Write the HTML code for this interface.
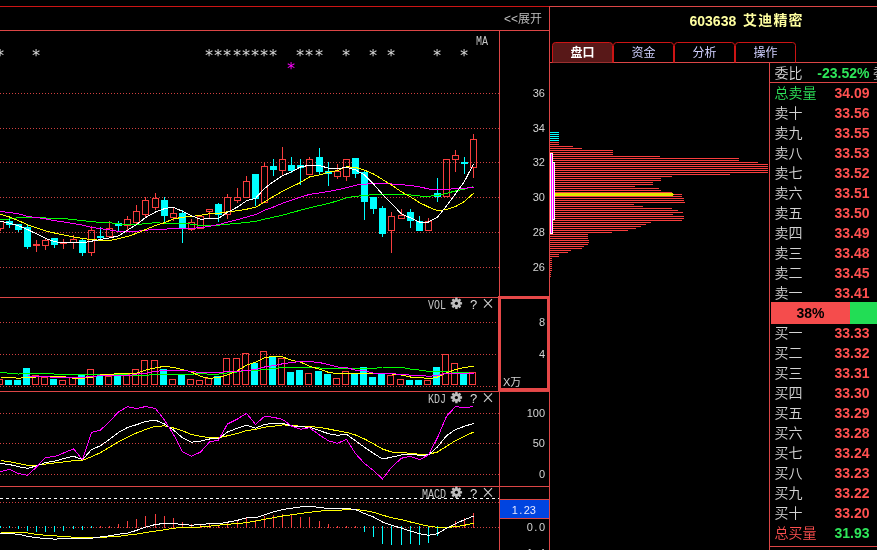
<!DOCTYPE html>
<html><head><meta charset="utf-8"><title>603638</title>
<style>
html,body{margin:0;padding:0;background:#000;}
#root{position:relative;width:877px;height:550px;overflow:hidden;background:#000;font-family:"Liberation Sans","Noto Sans CJK SC",sans-serif;}
svg{position:absolute;left:0;top:0;}
#tx{position:absolute;left:0;top:0;width:877px;height:550px;will-change:transform;}
.t{position:absolute;white-space:nowrap;line-height:1;color:#c8c8c8;}
.cj{font-family:"Liberation Sans","Noto Sans CJK SC",sans-serif;}
.ax{font-family:"Liberation Sans",sans-serif;font-size:11px;line-height:12px;color:#d4d4d4;}
.ax i{display:inline-block;width:6px;text-align:center;font-style:normal;}
.lb{font-family:"Liberation Mono",monospace;font-size:10px;line-height:12px;color:#c4c4c4;transform:scaleY(1.22);transform-origin:0 0;}
.q{font-family:"Liberation Sans",sans-serif;font-size:13px;line-height:14px;color:#dcdcdc;}
.as{font-family:"DejaVu Sans Mono","Liberation Mono",monospace;font-size:16px;line-height:16px;width:20px;text-align:center;color:#d8d8d8;}
.ttl{font-weight:bold;font-size:14px;line-height:18px;color:#ffffa0;}
.ob{font-size:14px;line-height:20px;font-weight:350;}
.num{font-family:"Liberation Sans",sans-serif;font-weight:bold;font-size:14px;line-height:20px;}
</style></head><body><div id="root">
<svg width="877" height="550" viewBox="0 0 877 550" shape-rendering="crispEdges">
<rect width="877" height="550" fill="#000"/>
<rect x="0" y="6" width="549" height="1" fill="#cc1414"/>
<rect x="549" y="6" width="328" height="1" fill="#dc4646"/>
<rect x="0" y="30" width="549" height="1" fill="#dc4646"/>
<rect x="499" y="30" width="1" height="520" fill="#dc4646"/>
<rect x="549" y="6" width="1" height="544" fill="#dc4646"/>
<rect x="549" y="62" width="328" height="1" fill="#dc4646"/>
<rect x="769" y="62" width="1" height="488" fill="#dc4646"/>
<rect x="769" y="82" width="108" height="1" fill="#dc4646"/>
<rect x="769" y="546" width="108" height="1" fill="#dc4646"/>
<rect x="0" y="297" width="499" height="1" fill="#dc4646"/>
<rect x="0" y="391" width="549" height="1" fill="#dc4646"/>
<rect x="0" y="486" width="549" height="1" fill="#dc4646"/>
<line x1="0" y1="93.5" x2="499" y2="93.5" stroke="#d04040" stroke-width="1" stroke-dasharray="1 2"/>
<line x1="0" y1="128.5" x2="499" y2="128.5" stroke="#d04040" stroke-width="1" stroke-dasharray="1 2"/>
<line x1="0" y1="162.5" x2="499" y2="162.5" stroke="#d04040" stroke-width="1" stroke-dasharray="1 2"/>
<line x1="0" y1="197.5" x2="499" y2="197.5" stroke="#d04040" stroke-width="1" stroke-dasharray="1 2"/>
<line x1="0" y1="232.5" x2="499" y2="232.5" stroke="#d04040" stroke-width="1" stroke-dasharray="1 2"/>
<line x1="0" y1="267.5" x2="499" y2="267.5" stroke="#d04040" stroke-width="1" stroke-dasharray="1 2"/>
<line x1="0" y1="322.5" x2="499" y2="322.5" stroke="#d04040" stroke-width="1" stroke-dasharray="1 2"/>
<line x1="0" y1="354.5" x2="499" y2="354.5" stroke="#d04040" stroke-width="1" stroke-dasharray="1 2"/>
<line x1="0" y1="386.5" x2="499" y2="386.5" stroke="#d04040" stroke-width="1" stroke-dasharray="1 2"/>
<line x1="0" y1="413.5" x2="499" y2="413.5" stroke="#d04040" stroke-width="1" stroke-dasharray="1 2"/>
<line x1="0" y1="443.5" x2="499" y2="443.5" stroke="#d04040" stroke-width="1" stroke-dasharray="1 2"/>
<line x1="0" y1="474.5" x2="499" y2="474.5" stroke="#d04040" stroke-width="1" stroke-dasharray="1 2"/>
<line x1="0" y1="502.5" x2="499" y2="502.5" stroke="#d04040" stroke-width="1" stroke-dasharray="1 2"/>
<line x1="0" y1="527.5" x2="499" y2="527.5" stroke="#d04040" stroke-width="1" stroke-dasharray="1 2"/>
<line x1="0" y1="498.5" x2="499" y2="498.5" stroke="#fff" stroke-width="1" stroke-dasharray="3 3"/>
<rect x="0" y="229" width="1" height="2" fill="#f83e3e"/>
<rect x="-2.5" y="221.5" width="6" height="7" fill="none" stroke="#f83e3e" stroke-width="1"/>
<rect x="9" y="219" width="1" height="2" fill="#00ffff"/>
<rect x="9" y="225" width="1" height="3" fill="#00ffff"/>
<rect x="6" y="221" width="7" height="4" fill="#00ffff"/>
<rect x="18" y="230" width="1" height="2" fill="#00ffff"/>
<rect x="15" y="224" width="7" height="6" fill="#00ffff"/>
<rect x="27" y="225" width="1" height="2" fill="#00ffff"/>
<rect x="27" y="247" width="1" height="2" fill="#00ffff"/>
<rect x="24" y="227" width="7" height="20" fill="#00ffff"/>
<rect x="36" y="240" width="1" height="4" fill="#f83e3e"/>
<rect x="36" y="246" width="1" height="6" fill="#f83e3e"/>
<rect x="33.5" y="244.5" width="6" height="1" fill="none" stroke="#f83e3e" stroke-width="1"/>
<rect x="45" y="238" width="1" height="2" fill="#f83e3e"/>
<rect x="45" y="246" width="1" height="4" fill="#f83e3e"/>
<rect x="42.5" y="240.5" width="6" height="5" fill="none" stroke="#f83e3e" stroke-width="1"/>
<rect x="54" y="245" width="1" height="3" fill="#00ffff"/>
<rect x="51" y="238" width="7" height="7" fill="#00ffff"/>
<rect x="63" y="239" width="1" height="3" fill="#f83e3e"/>
<rect x="63" y="244" width="1" height="5" fill="#f83e3e"/>
<rect x="60.5" y="242.5" width="6" height="1" fill="none" stroke="#f83e3e" stroke-width="1"/>
<rect x="73" y="235" width="1" height="4" fill="#f83e3e"/>
<rect x="73" y="243" width="1" height="6" fill="#f83e3e"/>
<rect x="70.5" y="239.5" width="6" height="3" fill="none" stroke="#f83e3e" stroke-width="1"/>
<rect x="82" y="239" width="1" height="1" fill="#00ffff"/>
<rect x="82" y="253" width="1" height="3" fill="#00ffff"/>
<rect x="79" y="240" width="7" height="13" fill="#00ffff"/>
<rect x="91" y="226" width="1" height="4" fill="#f83e3e"/>
<rect x="91" y="253" width="1" height="3" fill="#f83e3e"/>
<rect x="88.5" y="230.5" width="6" height="22" fill="none" stroke="#f83e3e" stroke-width="1"/>
<rect x="100" y="227" width="1" height="9" fill="#00ffff"/>
<rect x="100" y="238" width="1" height="3" fill="#00ffff"/>
<rect x="97" y="236" width="7" height="2" fill="#00ffff"/>
<rect x="109" y="221" width="1" height="7" fill="#f83e3e"/>
<rect x="106.5" y="228.5" width="6" height="8" fill="none" stroke="#f83e3e" stroke-width="1"/>
<rect x="118" y="221" width="1" height="2" fill="#00ffff"/>
<rect x="118" y="226" width="1" height="5" fill="#00ffff"/>
<rect x="115" y="223" width="7" height="3" fill="#00ffff"/>
<rect x="127" y="216" width="1" height="3" fill="#f83e3e"/>
<rect x="127" y="226" width="1" height="5" fill="#f83e3e"/>
<rect x="124.5" y="219.5" width="6" height="6" fill="none" stroke="#f83e3e" stroke-width="1"/>
<rect x="136" y="205" width="1" height="6" fill="#f83e3e"/>
<rect x="136" y="223" width="1" height="1" fill="#f83e3e"/>
<rect x="133.5" y="211.5" width="6" height="11" fill="none" stroke="#f83e3e" stroke-width="1"/>
<rect x="145" y="197" width="1" height="3" fill="#f83e3e"/>
<rect x="145" y="215" width="1" height="3" fill="#f83e3e"/>
<rect x="142.5" y="200.5" width="6" height="14" fill="none" stroke="#f83e3e" stroke-width="1"/>
<rect x="155" y="193" width="1" height="5" fill="#f83e3e"/>
<rect x="155" y="208" width="1" height="2" fill="#f83e3e"/>
<rect x="152.5" y="198.5" width="6" height="9" fill="none" stroke="#f83e3e" stroke-width="1"/>
<rect x="164" y="197" width="1" height="3" fill="#00ffff"/>
<rect x="164" y="216" width="1" height="7" fill="#00ffff"/>
<rect x="161" y="200" width="7" height="16" fill="#00ffff"/>
<rect x="173" y="208" width="1" height="5" fill="#f83e3e"/>
<rect x="173" y="218" width="1" height="3" fill="#f83e3e"/>
<rect x="170.5" y="213.5" width="6" height="4" fill="none" stroke="#f83e3e" stroke-width="1"/>
<rect x="182" y="210" width="1" height="3" fill="#00ffff"/>
<rect x="182" y="229" width="1" height="14" fill="#00ffff"/>
<rect x="179" y="213" width="7" height="16" fill="#00ffff"/>
<rect x="191" y="219" width="1" height="3" fill="#f83e3e"/>
<rect x="191" y="230" width="1" height="1" fill="#f83e3e"/>
<rect x="188.5" y="222.5" width="6" height="7" fill="none" stroke="#f83e3e" stroke-width="1"/>
<rect x="200" y="215" width="1" height="1" fill="#f83e3e"/>
<rect x="197.5" y="216.5" width="6" height="12" fill="none" stroke="#f83e3e" stroke-width="1"/>
<rect x="209" y="212" width="1" height="7" fill="#f83e3e"/>
<rect x="206.5" y="209.5" width="6" height="2" fill="none" stroke="#f83e3e" stroke-width="1"/>
<rect x="218" y="203" width="1" height="1" fill="#00ffff"/>
<rect x="218" y="215" width="1" height="7" fill="#00ffff"/>
<rect x="215" y="204" width="7" height="11" fill="#00ffff"/>
<rect x="227" y="194" width="1" height="3" fill="#f83e3e"/>
<rect x="227" y="215" width="1" height="4" fill="#f83e3e"/>
<rect x="224.5" y="197.5" width="6" height="17" fill="none" stroke="#f83e3e" stroke-width="1"/>
<rect x="237" y="188" width="1" height="9" fill="#f83e3e"/>
<rect x="237" y="201" width="1" height="2" fill="#f83e3e"/>
<rect x="234.5" y="197.5" width="6" height="3" fill="none" stroke="#f83e3e" stroke-width="1"/>
<rect x="246" y="176" width="1" height="5" fill="#f83e3e"/>
<rect x="243.5" y="181.5" width="6" height="16" fill="none" stroke="#f83e3e" stroke-width="1"/>
<rect x="255" y="199" width="1" height="7" fill="#00ffff"/>
<rect x="252" y="174" width="7" height="25" fill="#00ffff"/>
<rect x="264" y="162" width="1" height="4" fill="#f83e3e"/>
<rect x="261.5" y="166.5" width="6" height="36" fill="none" stroke="#f83e3e" stroke-width="1"/>
<rect x="273" y="159" width="1" height="7" fill="#00ffff"/>
<rect x="273" y="170" width="1" height="6" fill="#00ffff"/>
<rect x="270" y="166" width="7" height="4" fill="#00ffff"/>
<rect x="282" y="147" width="1" height="12" fill="#f83e3e"/>
<rect x="282" y="171" width="1" height="5" fill="#f83e3e"/>
<rect x="279.5" y="159.5" width="6" height="11" fill="none" stroke="#f83e3e" stroke-width="1"/>
<rect x="291" y="157" width="1" height="8" fill="#00ffff"/>
<rect x="291" y="171" width="1" height="2" fill="#00ffff"/>
<rect x="288" y="165" width="7" height="6" fill="#00ffff"/>
<rect x="300" y="159" width="1" height="6" fill="#00ffff"/>
<rect x="300" y="168" width="1" height="17" fill="#00ffff"/>
<rect x="297" y="165" width="7" height="3" fill="#00ffff"/>
<rect x="309" y="157" width="1" height="2" fill="#f83e3e"/>
<rect x="306.5" y="159.5" width="6" height="15" fill="none" stroke="#f83e3e" stroke-width="1"/>
<rect x="319" y="148" width="1" height="9" fill="#00ffff"/>
<rect x="319" y="172" width="1" height="3" fill="#00ffff"/>
<rect x="316" y="157" width="7" height="15" fill="#00ffff"/>
<rect x="328" y="162" width="1" height="9" fill="#00ffff"/>
<rect x="328" y="174" width="1" height="12" fill="#00ffff"/>
<rect x="325" y="171" width="7" height="3" fill="#00ffff"/>
<rect x="337" y="164" width="1" height="7" fill="#f83e3e"/>
<rect x="337" y="177" width="1" height="2" fill="#f83e3e"/>
<rect x="334.5" y="171.5" width="6" height="5" fill="none" stroke="#f83e3e" stroke-width="1"/>
<rect x="346" y="177" width="1" height="4" fill="#f83e3e"/>
<rect x="343.5" y="159.5" width="6" height="17" fill="none" stroke="#f83e3e" stroke-width="1"/>
<rect x="355" y="174" width="1" height="4" fill="#00ffff"/>
<rect x="352" y="158" width="7" height="16" fill="#00ffff"/>
<rect x="364" y="171" width="1" height="1" fill="#00ffff"/>
<rect x="364" y="202" width="1" height="18" fill="#00ffff"/>
<rect x="361" y="172" width="7" height="30" fill="#00ffff"/>
<rect x="373" y="209" width="1" height="5" fill="#00ffff"/>
<rect x="370" y="197" width="7" height="12" fill="#00ffff"/>
<rect x="382" y="206" width="1" height="2" fill="#00ffff"/>
<rect x="382" y="234" width="1" height="3" fill="#00ffff"/>
<rect x="379" y="208" width="7" height="26" fill="#00ffff"/>
<rect x="391" y="212" width="1" height="4" fill="#f83e3e"/>
<rect x="391" y="231" width="1" height="22" fill="#f83e3e"/>
<rect x="388.5" y="216.5" width="6" height="14" fill="none" stroke="#f83e3e" stroke-width="1"/>
<rect x="401" y="209" width="1" height="6" fill="#f83e3e"/>
<rect x="398.5" y="215.5" width="6" height="3" fill="none" stroke="#f83e3e" stroke-width="1"/>
<rect x="410" y="209" width="1" height="3" fill="#00ffff"/>
<rect x="410" y="221" width="1" height="7" fill="#00ffff"/>
<rect x="407" y="212" width="7" height="9" fill="#00ffff"/>
<rect x="419" y="216" width="1" height="5" fill="#00ffff"/>
<rect x="416" y="221" width="7" height="10" fill="#00ffff"/>
<rect x="428" y="218" width="1" height="3" fill="#f83e3e"/>
<rect x="425.5" y="221.5" width="6" height="9" fill="none" stroke="#f83e3e" stroke-width="1"/>
<rect x="437" y="178" width="1" height="15" fill="#00ffff"/>
<rect x="437" y="197" width="1" height="5" fill="#00ffff"/>
<rect x="434" y="193" width="7" height="4" fill="#00ffff"/>
<rect x="443.5" y="159.5" width="6" height="37" fill="none" stroke="#f83e3e" stroke-width="1"/>
<rect x="455" y="150" width="1" height="5" fill="#f83e3e"/>
<rect x="455" y="160" width="1" height="12" fill="#f83e3e"/>
<rect x="452.5" y="155.5" width="6" height="4" fill="none" stroke="#f83e3e" stroke-width="1"/>
<rect x="464" y="157" width="1" height="5" fill="#00ffff"/>
<rect x="464" y="164" width="1" height="10" fill="#00ffff"/>
<rect x="461" y="162" width="7" height="2" fill="#00ffff"/>
<rect x="473" y="134" width="1" height="5" fill="#f83e3e"/>
<rect x="473" y="168" width="1" height="10" fill="#f83e3e"/>
<rect x="470.5" y="139.5" width="6" height="28" fill="none" stroke="#f83e3e" stroke-width="1"/>
<polyline points="0.5,219.5 9.5,219.0 18.5,217.6 27.5,217.6 36.5,217.8 45.5,218.0 54.5,218.6 63.5,218.6 73.5,219.5 82.5,220.7 91.5,221.6 100.5,222.5 109.5,222.7 118.5,223.9 127.5,224.5 136.5,224.5 145.5,223.7 155.5,222.7 164.5,223.3 173.5,223.3 182.5,223.3 191.5,224.2 200.5,225.5 209.5,225.9 218.5,225.2 227.5,224.2 237.5,223.4 246.5,222.4 255.5,221.5 264.5,219.2 273.5,217.1 282.5,215.2 291.5,212.7 300.5,210.2 309.5,207.9 319.5,205.5 328.5,203.4 337.5,200.9 346.5,197.7 355.5,196.3 364.5,195.6 373.5,194.3 382.5,194.4 391.5,194.4 401.5,194.4 410.5,195.0 419.5,196.0 428.5,196.2 437.5,195.5 446.5,193.3 455.5,191.0 464.5,189.0 473.5,186.6" fill="none" stroke="#00ff00" stroke-width="1"/>
<polyline points="0.5,211.3 9.5,212.6 18.5,213.8 27.5,216.3 36.5,217.6 45.5,218.8 54.5,220.7 63.5,222.0 73.5,223.6 82.5,225.1 91.5,227.4 100.5,228.6 109.5,230.0 118.5,231.4 127.5,231.4 136.5,231.4 145.5,230.2 155.5,229.3 164.5,229.3 173.5,228.3 182.5,228.3 191.5,228.3 200.5,227.7 209.5,226.3 218.5,224.6 227.5,222.1 237.5,219.6 246.5,217.1 255.5,214.6 264.5,210.2 273.5,207.0 282.5,203.3 291.5,200.2 300.5,197.2 309.5,194.4 319.5,193.0 328.5,191.5 337.5,189.8 346.5,187.7 355.5,185.2 364.5,184.3 373.5,183.3 382.5,183.5 391.5,184.0 401.5,184.6 410.5,185.6 419.5,186.8 428.5,189.0 437.5,189.5 446.5,189.7 455.5,188.4 464.5,188.3 473.5,187.2" fill="none" stroke="#ff00ff" stroke-width="1"/>
<polyline points="0.5,214.4 9.5,217.0 18.5,220.7 27.5,224.7 36.5,227.9 45.5,230.8 54.5,233.0 63.5,234.9 73.5,237.0 82.5,238.5 91.5,239.5 100.5,240.3 109.5,240.5 118.5,238.7 127.5,236.5 136.5,233.3 145.5,229.6 155.5,225.4 164.5,222.7 173.5,218.9 182.5,217.3 191.5,216.4 200.5,215.3 209.5,213.7 218.5,213.3 227.5,211.7 237.5,210.8 246.5,209.2 255.5,207.4 264.5,202.0 273.5,196.4 282.5,191.3 291.5,186.9 300.5,182.5 309.5,177.0 319.5,174.9 328.5,172.4 337.5,170.5 346.5,166.7 355.5,167.4 364.5,170.1 373.5,174.0 382.5,179.5 391.5,185.0 401.5,191.9 410.5,196.9 419.5,202.6 428.5,207.0 437.5,210.7 446.5,209.5 455.5,206.6 464.5,201.4 473.5,193.3" fill="none" stroke="#ffff00" stroke-width="1"/>
<polyline points="0.5,221.3 9.5,223.2 18.5,225.7 27.5,229.5 36.5,233.9 45.5,238.3 54.5,241.7 63.5,243.0 73.5,242.4 82.5,242.7 91.5,241.2 100.5,239.5 109.5,238.0 118.5,235.8 127.5,230.2 136.5,224.5 145.5,217.6 155.5,212.0 164.5,208.6 173.5,207.2 182.5,211.4 191.5,215.8 200.5,219.3 209.5,218.5 218.5,218.3 227.5,212.4 237.5,207.0 246.5,200.8 255.5,198.3 264.5,188.4 273.5,181.6 282.5,175.8 291.5,171.8 300.5,167.0 309.5,165.2 319.5,165.5 328.5,168.2 337.5,168.6 346.5,167.4 355.5,169.9 364.5,174.9 373.5,184.0 382.5,194.4 391.5,203.6 401.5,213.9 410.5,217.9 419.5,222.0 428.5,222.0 437.5,217.0 446.5,206.0 455.5,193.7 464.5,181.3 473.5,164.0" fill="none" stroke="#ffffff" stroke-width="1"/>
<rect x="-3.5" y="379.5" width="6" height="5" fill="none" stroke="#f83e3e" stroke-width="1"/>
<rect x="5" y="380" width="7" height="5" fill="#00ffff"/>
<rect x="14" y="380" width="7" height="5" fill="#00ffff"/>
<rect x="23" y="368" width="7" height="17" fill="#00ffff"/>
<rect x="32.5" y="375.5" width="6" height="9" fill="none" stroke="#f83e3e" stroke-width="1"/>
<rect x="41.5" y="377.5" width="6" height="7" fill="none" stroke="#f83e3e" stroke-width="1"/>
<rect x="50" y="379" width="7" height="6" fill="#00ffff"/>
<rect x="59.5" y="380.5" width="6" height="4" fill="none" stroke="#f83e3e" stroke-width="1"/>
<rect x="69.5" y="377.5" width="6" height="7" fill="none" stroke="#f83e3e" stroke-width="1"/>
<rect x="78" y="375" width="7" height="10" fill="#00ffff"/>
<rect x="87.5" y="369.5" width="6" height="15" fill="none" stroke="#f83e3e" stroke-width="1"/>
<rect x="96" y="376" width="7" height="9" fill="#00ffff"/>
<rect x="105.5" y="376.5" width="6" height="8" fill="none" stroke="#f83e3e" stroke-width="1"/>
<rect x="114" y="376" width="7" height="9" fill="#00ffff"/>
<rect x="123.5" y="374.5" width="6" height="10" fill="none" stroke="#f83e3e" stroke-width="1"/>
<rect x="132.5" y="369.5" width="6" height="15" fill="none" stroke="#f83e3e" stroke-width="1"/>
<rect x="141.5" y="360.5" width="6" height="24" fill="none" stroke="#f83e3e" stroke-width="1"/>
<rect x="151.5" y="360.5" width="6" height="24" fill="none" stroke="#f83e3e" stroke-width="1"/>
<rect x="160" y="369" width="7" height="16" fill="#00ffff"/>
<rect x="169.5" y="379.5" width="6" height="5" fill="none" stroke="#f83e3e" stroke-width="1"/>
<rect x="178" y="375" width="7" height="10" fill="#00ffff"/>
<rect x="187.5" y="379.5" width="6" height="5" fill="none" stroke="#f83e3e" stroke-width="1"/>
<rect x="196.5" y="380.5" width="6" height="4" fill="none" stroke="#f83e3e" stroke-width="1"/>
<rect x="205.5" y="378.5" width="6" height="6" fill="none" stroke="#f83e3e" stroke-width="1"/>
<rect x="214" y="376" width="7" height="9" fill="#00ffff"/>
<rect x="223.5" y="358.5" width="6" height="26" fill="none" stroke="#f83e3e" stroke-width="1"/>
<rect x="233.5" y="358.5" width="6" height="26" fill="none" stroke="#f83e3e" stroke-width="1"/>
<rect x="242.5" y="353.5" width="6" height="31" fill="none" stroke="#f83e3e" stroke-width="1"/>
<rect x="251" y="363" width="7" height="22" fill="#00ffff"/>
<rect x="260.5" y="351.5" width="6" height="33" fill="none" stroke="#f83e3e" stroke-width="1"/>
<rect x="269" y="356" width="7" height="29" fill="#00ffff"/>
<rect x="278.5" y="358.5" width="6" height="26" fill="none" stroke="#f83e3e" stroke-width="1"/>
<rect x="287" y="372" width="7" height="13" fill="#00ffff"/>
<rect x="296" y="370" width="7" height="15" fill="#00ffff"/>
<rect x="305.5" y="373.5" width="6" height="11" fill="none" stroke="#f83e3e" stroke-width="1"/>
<rect x="315" y="371" width="7" height="14" fill="#00ffff"/>
<rect x="324" y="374" width="7" height="11" fill="#00ffff"/>
<rect x="333.5" y="378.5" width="6" height="6" fill="none" stroke="#f83e3e" stroke-width="1"/>
<rect x="342.5" y="371.5" width="6" height="13" fill="none" stroke="#f83e3e" stroke-width="1"/>
<rect x="351" y="373" width="7" height="12" fill="#00ffff"/>
<rect x="360" y="367" width="7" height="18" fill="#00ffff"/>
<rect x="369" y="377" width="7" height="8" fill="#00ffff"/>
<rect x="378" y="374" width="7" height="11" fill="#00ffff"/>
<rect x="387.5" y="375.5" width="6" height="9" fill="none" stroke="#f83e3e" stroke-width="1"/>
<rect x="397.5" y="379.5" width="6" height="5" fill="none" stroke="#f83e3e" stroke-width="1"/>
<rect x="406" y="380" width="7" height="5" fill="#00ffff"/>
<rect x="415" y="380" width="7" height="5" fill="#00ffff"/>
<rect x="424.5" y="380.5" width="6" height="4" fill="none" stroke="#f83e3e" stroke-width="1"/>
<rect x="433" y="367" width="7" height="18" fill="#00ffff"/>
<rect x="442.5" y="354.5" width="6" height="30" fill="none" stroke="#f83e3e" stroke-width="1"/>
<rect x="451.5" y="363.5" width="6" height="21" fill="none" stroke="#f83e3e" stroke-width="1"/>
<rect x="460" y="373" width="7" height="12" fill="#00ffff"/>
<rect x="469.5" y="372.5" width="6" height="12" fill="none" stroke="#f83e3e" stroke-width="1"/>
<polyline points="0.5,372.4 9.5,373.2 18.5,374.1 27.5,373.2 36.5,373.2 45.5,373.2 54.5,374.1 63.5,374.1 73.5,374.1 82.5,374.1 91.5,374.1 100.5,374.5 109.5,374.5 118.5,374.5 127.5,375.0 136.5,375.5 145.5,375.5 155.5,374.1 164.5,374.1 173.5,374.1 182.5,374.1 191.5,374.1 200.5,373.8 209.5,374.1 218.5,374.1 227.5,372.9 237.5,372.0 246.5,370.5 255.5,370.5 264.5,369.5 273.5,368.6 282.5,367.4 291.5,367.4 300.5,367.4 309.5,367.6 319.5,368.0 328.5,368.2 337.5,368.6 346.5,368.6 355.5,368.6 364.5,368.6 373.5,368.6 382.5,367.0 391.5,367.0 401.5,367.2 410.5,369.1 419.5,370.1 428.5,371.4 437.5,371.4 446.5,371.4 455.5,372.4 464.5,372.8 473.5,373.2" fill="none" stroke="#00ff00" stroke-width="1"/>
<polyline points="0.5,377.4 9.5,377.4 18.5,378.3 27.5,377.4 36.5,377.0 45.5,376.8 54.5,376.6 63.5,376.6 73.5,378.3 82.5,378.3 91.5,377.4 100.5,375.0 109.5,374.5 118.5,373.6 127.5,373.6 136.5,373.2 145.5,370.1 155.5,367.9 164.5,366.3 173.5,367.4 182.5,369.5 191.5,372.0 200.5,376.4 209.5,378.3 218.5,377.6 227.5,374.9 237.5,370.7 246.5,365.1 255.5,362.3 264.5,357.6 273.5,356.3 282.5,356.9 291.5,360.3 300.5,362.0 309.5,366.3 319.5,369.1 328.5,372.4 337.5,373.6 346.5,373.6 355.5,373.6 364.5,373.6 373.5,373.2 382.5,373.6 391.5,374.0 401.5,375.1 410.5,377.0 419.5,377.0 428.5,378.9 437.5,377.0 446.5,372.9 455.5,369.5 464.5,367.4 473.5,366.3" fill="none" stroke="#ffff00" stroke-width="1"/>
<polyline points="27.5,375.8 36.5,376.6 45.5,376.6 54.5,377.4 63.5,377.4 73.5,377.4 82.5,377.4 91.5,376.4 100.5,375.8 109.5,375.8 118.5,375.8 127.5,375.8 136.5,374.1 145.5,373.2 155.5,371.4 164.5,370.5 173.5,370.5 182.5,370.5 191.5,371.4 200.5,372.6 209.5,372.6 218.5,372.6 227.5,371.4 237.5,371.4 246.5,370.5 255.5,369.5 264.5,367.0 273.5,365.7 282.5,363.8 291.5,362.6 300.5,361.5 309.5,361.5 319.5,362.6 328.5,364.5 337.5,367.0 346.5,367.6 355.5,370.1 364.5,370.7 373.5,373.2 382.5,373.6 391.5,373.6 401.5,374.5 410.5,375.1 419.5,375.1 428.5,376.4 437.5,375.5 446.5,373.2 455.5,373.2 464.5,373.2 473.5,373.2" fill="none" stroke="#ff00ff" stroke-width="1"/>
<polyline points="0.5,460.6 9.5,461.6 18.5,463.5 27.5,465.4 36.5,465.4 45.5,464.1 54.5,463.0 63.5,462.0 73.5,460.6 82.5,460.3 91.5,456.8 100.5,452.6 109.5,447.3 118.5,441.8 127.5,437.3 136.5,433.0 145.5,429.5 155.5,426.3 164.5,425.9 173.5,428.0 182.5,430.8 191.5,434.5 200.5,436.4 209.5,437.7 218.5,437.7 227.5,435.8 237.5,433.5 246.5,430.6 255.5,429.5 264.5,427.2 273.5,426.3 282.5,424.9 291.5,425.3 300.5,426.3 309.5,426.3 319.5,427.5 328.5,429.0 337.5,430.8 346.5,432.4 355.5,435.0 364.5,439.0 373.5,443.8 382.5,449.0 391.5,452.0 401.5,452.4 410.5,453.4 419.5,454.3 428.5,454.3 437.5,452.0 446.5,446.3 455.5,440.6 464.5,436.4 473.5,432.0" fill="none" stroke="#ffff00" stroke-width="1"/>
<polyline points="0.5,463.5 9.5,464.5 18.5,466.7 27.5,468.3 36.5,466.0 45.5,462.5 54.5,461.2 63.5,458.6 73.5,456.2 82.5,459.7 91.5,449.6 100.5,445.7 109.5,439.3 118.5,432.4 127.5,427.5 136.5,424.7 145.5,421.5 155.5,420.2 164.5,424.0 173.5,430.0 182.5,437.8 191.5,442.2 200.5,441.2 209.5,439.0 218.5,438.7 227.5,432.0 237.5,428.2 246.5,425.3 255.5,428.2 264.5,424.4 273.5,423.4 282.5,423.4 291.5,425.8 300.5,426.8 309.5,427.2 319.5,430.6 328.5,433.7 337.5,435.3 346.5,434.3 355.5,440.8 364.5,447.3 373.5,453.4 382.5,459.0 391.5,457.2 401.5,454.9 410.5,454.3 419.5,455.3 428.5,454.9 437.5,446.9 446.5,435.8 455.5,429.5 464.5,426.3 473.5,423.4" fill="none" stroke="#ffffff" stroke-width="1"/>
<polyline points="0.5,471.7 9.5,469.2 18.5,473.6 27.5,475.3 36.5,467.0 45.5,457.2 54.5,456.8 63.5,453.0 73.5,448.8 82.5,459.7 91.5,432.4 100.5,430.1 109.5,421.5 118.5,412.0 127.5,406.7 136.5,408.5 145.5,406.6 155.5,408.5 164.5,420.0 173.5,434.5 182.5,451.6 191.5,456.4 200.5,452.0 209.5,442.0 218.5,440.0 227.5,424.0 237.5,419.0 246.5,413.3 255.5,424.4 264.5,416.3 273.5,417.3 282.5,419.4 291.5,426.0 300.5,429.3 309.5,427.7 319.5,435.0 328.5,440.8 337.5,443.3 346.5,439.3 355.5,453.6 364.5,463.5 373.5,470.5 382.5,479.0 391.5,467.3 401.5,458.2 410.5,456.4 419.5,459.7 428.5,454.9 437.5,437.7 446.5,416.3 455.5,406.6 464.5,407.6 473.5,406.6" fill="none" stroke="#ff00ff" stroke-width="1"/>
<rect x="0" y="526" width="1" height="2" fill="#00ffff"/>
<rect x="9" y="526" width="1" height="2" fill="#00ffff"/>
<rect x="18" y="526" width="1" height="3" fill="#00ffff"/>
<rect x="27" y="526" width="1" height="5" fill="#00ffff"/>
<rect x="36" y="526" width="1" height="6" fill="#00ffff"/>
<rect x="45" y="526" width="1" height="6" fill="#00ffff"/>
<rect x="54" y="526" width="1" height="6" fill="#00ffff"/>
<rect x="63" y="526" width="1" height="5" fill="#00ffff"/>
<rect x="73" y="526" width="1" height="3" fill="#00ffff"/>
<rect x="82" y="526" width="1" height="4" fill="#00ffff"/>
<rect x="91" y="526" width="1" height="2" fill="#00ffff"/>
<rect x="100" y="526" width="1" height="2" fill="#f83e3e"/>
<rect x="109" y="526" width="1" height="2" fill="#f83e3e"/>
<rect x="118" y="524" width="1" height="4" fill="#f83e3e"/>
<rect x="127" y="521" width="1" height="7" fill="#f83e3e"/>
<rect x="136" y="519" width="1" height="9" fill="#f83e3e"/>
<rect x="145" y="516" width="1" height="12" fill="#f83e3e"/>
<rect x="155" y="514" width="1" height="14" fill="#f83e3e"/>
<rect x="164" y="516" width="1" height="12" fill="#f83e3e"/>
<rect x="173" y="518" width="1" height="10" fill="#f83e3e"/>
<rect x="182" y="522" width="1" height="6" fill="#f83e3e"/>
<rect x="191" y="524" width="1" height="4" fill="#f83e3e"/>
<rect x="200" y="525" width="1" height="3" fill="#f83e3e"/>
<rect x="209" y="524" width="1" height="4" fill="#f83e3e"/>
<rect x="218" y="525" width="1" height="3" fill="#f83e3e"/>
<rect x="227" y="522" width="1" height="6" fill="#f83e3e"/>
<rect x="237" y="521" width="1" height="7" fill="#f83e3e"/>
<rect x="246" y="518" width="1" height="10" fill="#f83e3e"/>
<rect x="255" y="520" width="1" height="8" fill="#f83e3e"/>
<rect x="264" y="516" width="1" height="12" fill="#f83e3e"/>
<rect x="273" y="515" width="1" height="13" fill="#f83e3e"/>
<rect x="282" y="514" width="1" height="14" fill="#f83e3e"/>
<rect x="291" y="515" width="1" height="13" fill="#f83e3e"/>
<rect x="300" y="517" width="1" height="11" fill="#f83e3e"/>
<rect x="309" y="517" width="1" height="11" fill="#f83e3e"/>
<rect x="319" y="521" width="1" height="7" fill="#f83e3e"/>
<rect x="328" y="524" width="1" height="4" fill="#f83e3e"/>
<rect x="337" y="526" width="1" height="2" fill="#f83e3e"/>
<rect x="346" y="526" width="1" height="2" fill="#f83e3e"/>
<rect x="355" y="526" width="1" height="2" fill="#f83e3e"/>
<rect x="364" y="526" width="1" height="6" fill="#00ffff"/>
<rect x="373" y="526" width="1" height="11" fill="#00ffff"/>
<rect x="382" y="526" width="1" height="18" fill="#00ffff"/>
<rect x="391" y="526" width="1" height="19" fill="#00ffff"/>
<rect x="401" y="526" width="1" height="19" fill="#00ffff"/>
<rect x="410" y="526" width="1" height="18" fill="#00ffff"/>
<rect x="419" y="526" width="1" height="19" fill="#00ffff"/>
<rect x="428" y="526" width="1" height="17" fill="#00ffff"/>
<rect x="437" y="526" width="1" height="10" fill="#00ffff"/>
<rect x="455" y="521" width="1" height="7" fill="#f83e3e"/>
<rect x="464" y="518" width="1" height="10" fill="#f83e3e"/>
<rect x="473" y="513" width="1" height="15" fill="#f83e3e"/>
<polyline points="0.5,532.2 9.5,532.2 18.5,532.2 27.5,533.0 36.5,534.3 45.5,535.3 54.5,535.8 63.5,536.5 73.5,537.2 82.5,537.4 91.5,537.5 100.5,537.3 109.5,536.9 118.5,536.3 127.5,535.1 136.5,534.1 145.5,532.6 155.5,531.1 164.5,529.7 173.5,528.2 182.5,527.4 191.5,527.4 200.5,527.0 209.5,526.2 218.5,525.2 227.5,524.2 237.5,523.7 246.5,522.5 255.5,521.2 264.5,519.3 273.5,517.8 282.5,516.0 291.5,514.8 300.5,513.4 309.5,512.3 319.5,511.1 328.5,510.4 337.5,510.4 346.5,509.6 355.5,509.6 364.5,510.4 373.5,512.3 382.5,515.1 391.5,517.8 401.5,519.7 410.5,522.0 419.5,524.2 428.5,526.2 437.5,527.4 446.5,527.4 455.5,526.7 464.5,525.2 473.5,523.4" fill="none" stroke="#ffff00" stroke-width="1"/>
<polyline points="0.5,533.1 9.5,533.5 18.5,534.3 27.5,536.3 36.5,537.7 45.5,538.6 54.5,539.1 63.5,538.8 73.5,538.8 82.5,539.0 91.5,538.2 100.5,537.0 109.5,535.8 118.5,534.2 127.5,533.1 136.5,530.4 145.5,527.1 155.5,524.5 164.5,523.4 173.5,523.4 182.5,524.5 191.5,525.2 200.5,524.5 209.5,523.7 218.5,523.7 227.5,522.2 237.5,520.3 246.5,517.8 255.5,517.8 264.5,514.8 273.5,511.9 282.5,509.6 291.5,508.2 300.5,507.0 309.5,506.4 319.5,507.4 328.5,508.5 337.5,508.5 346.5,508.5 355.5,509.6 364.5,513.5 373.5,517.0 382.5,522.0 391.5,525.2 401.5,528.2 410.5,531.1 419.5,533.7 428.5,535.3 437.5,533.7 446.5,528.2 455.5,523.7 464.5,519.7 473.5,516.0" fill="none" stroke="#ffffff" stroke-width="1"/>
<rect x="499.5" y="297.5" width="49" height="92" fill="none" stroke="#e64848" stroke-width="3"/>
<rect x="500" y="499" width="49" height="20" fill="#dc4646"/><rect x="500" y="500" width="49" height="18" fill="#0044e0"/>
<rect x="550" y="132" width="9" height="1" fill="#00ffff"/>
<rect x="550" y="134" width="9" height="1" fill="#00ffff"/>
<rect x="550" y="136" width="9" height="1" fill="#00ffff"/>
<rect x="550" y="138" width="9" height="1" fill="#00ffff"/>
<rect x="550" y="140" width="9" height="1" fill="#00ffff"/>
<rect x="550" y="142" width="9" height="1" fill="#f83e3e"/>
<rect x="550" y="144" width="9" height="1" fill="#f83e3e"/>
<rect x="550" y="146" width="23" height="1" fill="#f83e3e"/>
<rect x="550" y="148" width="32" height="1" fill="#f83e3e"/>
<rect x="550" y="150" width="63" height="1" fill="#f83e3e"/>
<rect x="550" y="152" width="63" height="1" fill="#f83e3e"/>
<rect x="553" y="154" width="60" height="1" fill="#f83e3e"/>
<rect x="553" y="156" width="107" height="1" fill="#f83e3e"/>
<rect x="553" y="158" width="186" height="1" fill="#f83e3e"/>
<rect x="553" y="160" width="186" height="1" fill="#f83e3e"/>
<rect x="555" y="162" width="203" height="1" fill="#f83e3e"/>
<rect x="555" y="164" width="213" height="1" fill="#f83e3e"/>
<rect x="555" y="166" width="213" height="1" fill="#f83e3e"/>
<rect x="555" y="168" width="213" height="1" fill="#f83e3e"/>
<rect x="555" y="170" width="213" height="1" fill="#f83e3e"/>
<rect x="555" y="172" width="213" height="1" fill="#f83e3e"/>
<rect x="555" y="174" width="175" height="1" fill="#f83e3e"/>
<rect x="555" y="176" width="117" height="1" fill="#f83e3e"/>
<rect x="555" y="178" width="106" height="1" fill="#f83e3e"/>
<rect x="555" y="180" width="106" height="1" fill="#f83e3e"/>
<rect x="555" y="182" width="98" height="1" fill="#f83e3e"/>
<rect x="555" y="184" width="98" height="1" fill="#f83e3e"/>
<rect x="555" y="186" width="80" height="1" fill="#f83e3e"/>
<rect x="555" y="188" width="104" height="1" fill="#f83e3e"/>
<rect x="555" y="190" width="106" height="1" fill="#f83e3e"/>
<rect x="555" y="192" width="117" height="1" fill="#f83e3e"/>
<rect x="555" y="194" width="127" height="1" fill="#f83e3e"/>
<rect x="555" y="196" width="127" height="1" fill="#f83e3e"/>
<rect x="555" y="198" width="129" height="1" fill="#f83e3e"/>
<rect x="555" y="200" width="129" height="1" fill="#f83e3e"/>
<rect x="555" y="202" width="130" height="1" fill="#f83e3e"/>
<rect x="555" y="204" width="79" height="1" fill="#f83e3e"/>
<rect x="555" y="206" width="88" height="1" fill="#f83e3e"/>
<rect x="555" y="208" width="117" height="1" fill="#f83e3e"/>
<rect x="555" y="210" width="123" height="1" fill="#f83e3e"/>
<rect x="555" y="212" width="128" height="1" fill="#f83e3e"/>
<rect x="555" y="214" width="118" height="1" fill="#f83e3e"/>
<rect x="555" y="216" width="129" height="1" fill="#f83e3e"/>
<rect x="555" y="218" width="129" height="1" fill="#f83e3e"/>
<rect x="553" y="220" width="129" height="1" fill="#f83e3e"/>
<rect x="553" y="222" width="98" height="1" fill="#f83e3e"/>
<rect x="553" y="224" width="93" height="1" fill="#f83e3e"/>
<rect x="553" y="226" width="88" height="1" fill="#f83e3e"/>
<rect x="553" y="228" width="83" height="1" fill="#f83e3e"/>
<rect x="553" y="230" width="75" height="1" fill="#f83e3e"/>
<rect x="553" y="232" width="59" height="1" fill="#f83e3e"/>
<rect x="550" y="234" width="38" height="1" fill="#f83e3e"/>
<rect x="550" y="236" width="38" height="1" fill="#f83e3e"/>
<rect x="550" y="238" width="38" height="1" fill="#f83e3e"/>
<rect x="550" y="240" width="39" height="1" fill="#f83e3e"/>
<rect x="550" y="242" width="39" height="1" fill="#f83e3e"/>
<rect x="550" y="244" width="38" height="1" fill="#f83e3e"/>
<rect x="550" y="246" width="34" height="1" fill="#f83e3e"/>
<rect x="550" y="248" width="32" height="1" fill="#f83e3e"/>
<rect x="550" y="250" width="21" height="1" fill="#f83e3e"/>
<rect x="550" y="252" width="18" height="1" fill="#f83e3e"/>
<rect x="550" y="254" width="9" height="1" fill="#f83e3e"/>
<rect x="550" y="256" width="9" height="1" fill="#f83e3e"/>
<rect x="550" y="258" width="2" height="1" fill="#f83e3e"/>
<rect x="550" y="260" width="2" height="1" fill="#f83e3e"/>
<rect x="550" y="262" width="2" height="1" fill="#f83e3e"/>
<rect x="550" y="264" width="2" height="1" fill="#f83e3e"/>
<rect x="550" y="266" width="2" height="1" fill="#f83e3e"/>
<rect x="550" y="268" width="2" height="1" fill="#f83e3e"/>
<rect x="550" y="270" width="2" height="1" fill="#f83e3e"/>
<rect x="550" y="272" width="1" height="1" fill="#f83e3e"/>
<rect x="550" y="274" width="1" height="1" fill="#f83e3e"/>
<rect x="550" y="276" width="1" height="1" fill="#f83e3e"/>
<rect x="550" y="153" width="3" height="81" fill="#fff"/><rect x="551" y="154" width="1" height="79" fill="#ff00ff"/>
<rect x="553" y="162" width="2" height="58" fill="#fff"/><rect x="553" y="163" width="1" height="56" fill="#ff00ff"/>
<rect x="555" y="193" width="118" height="3" fill="#e0e600"/><rect x="673" y="194" width="1" height="1" fill="#e0e600"/>
<g shape-rendering="auto"><polygon points="462.08,302.15 462.08,304.45 460.51,304.57 460.20,305.31 461.23,306.50 459.60,308.13 458.41,307.10 457.67,307.41 457.55,308.98 455.25,308.98 455.13,307.41 454.39,307.10 453.20,308.13 451.57,306.50 452.60,305.31 452.29,304.57 450.72,304.45 450.72,302.15 452.29,302.03 452.60,301.29 451.57,300.10 453.20,298.47 454.39,299.50 455.13,299.19 455.25,297.62 457.55,297.62 457.67,299.19 458.41,299.50 459.60,298.47 461.23,300.10 460.20,301.29 460.51,302.03" fill="#bdbdbd"/><circle cx="456.4" cy="303.3" r="1.6" fill="#000"/></g>
<g shape-rendering="auto" stroke="#d0d0d0" stroke-width="1.1"><line x1="484" y1="299.1" x2="492" y2="307.6"/><line x1="492" y1="299.1" x2="484" y2="307.6"/></g>
<g shape-rendering="auto"><polygon points="462.08,396.35 462.08,398.65 460.51,398.77 460.20,399.51 461.23,400.70 459.60,402.33 458.41,401.30 457.67,401.61 457.55,403.18 455.25,403.18 455.13,401.61 454.39,401.30 453.20,402.33 451.57,400.70 452.60,399.51 452.29,398.77 450.72,398.65 450.72,396.35 452.29,396.23 452.60,395.49 451.57,394.30 453.20,392.67 454.39,393.70 455.13,393.39 455.25,391.82 457.55,391.82 457.67,393.39 458.41,393.70 459.60,392.67 461.23,394.30 460.20,395.49 460.51,396.23" fill="#bdbdbd"/><circle cx="456.4" cy="397.5" r="1.6" fill="#000"/></g>
<g shape-rendering="auto" stroke="#d0d0d0" stroke-width="1.1"><line x1="484" y1="393.3" x2="492" y2="401.8"/><line x1="492" y1="393.3" x2="484" y2="401.8"/></g>
<g shape-rendering="auto"><polygon points="462.08,491.15 462.08,493.45 460.51,493.57 460.20,494.31 461.23,495.50 459.60,497.13 458.41,496.10 457.67,496.41 457.55,497.98 455.25,497.98 455.13,496.41 454.39,496.10 453.20,497.13 451.57,495.50 452.60,494.31 452.29,493.57 450.72,493.45 450.72,491.15 452.29,491.03 452.60,490.29 451.57,489.10 453.20,487.47 454.39,488.50 455.13,488.19 455.25,486.62 457.55,486.62 457.67,488.19 458.41,488.50 459.60,487.47 461.23,489.10 460.20,490.29 460.51,491.03" fill="#bdbdbd"/><circle cx="456.4" cy="492.3" r="1.6" fill="#000"/></g>
<g shape-rendering="auto" stroke="#d0d0d0" stroke-width="1.1"><line x1="484" y1="488.1" x2="492" y2="496.6"/><line x1="492" y1="488.1" x2="484" y2="496.6"/></g>
<path d="M552.5 62.5 V45.5 Q552.5 42.5 555.5 42.5 H609.5 Q612.5 42.5 612.5 45.5 V62.5" fill="#581818" stroke="#cc1414" stroke-width="1" shape-rendering="auto"/>
<path d="M613.5 62.5 V45.5 Q613.5 42.5 616.5 42.5 H670.5 Q673.5 42.5 673.5 45.5 V62.5" fill="none" stroke="#cc1414" stroke-width="1" shape-rendering="auto"/>
<path d="M674.5 62.5 V45.5 Q674.5 42.5 677.5 42.5 H731.5 Q734.5 42.5 734.5 45.5 V62.5" fill="none" stroke="#cc1414" stroke-width="1" shape-rendering="auto"/>
<path d="M735.5 62.5 V45.5 Q735.5 42.5 738.5 42.5 H792.5 Q795.5 42.5 795.5 45.5 V62.5" fill="none" stroke="#cc1414" stroke-width="1" shape-rendering="auto"/>
<rect x="771" y="302" width="79" height="22" fill="#f54c4c"/><rect x="850" y="302" width="27" height="22" fill="#22dd55"/>
</svg>
<div id="tx">
<div class="t ax" style="right:332px;top:87.2px;">36</div>
<div class="t ax" style="right:332px;top:122.2px;">34</div>
<div class="t ax" style="right:332px;top:156.2px;">32</div>
<div class="t ax" style="right:332px;top:191.2px;">30</div>
<div class="t ax" style="right:332px;top:226.2px;">28</div>
<div class="t ax" style="right:332px;top:261.2px;">26</div>
<div class="t ax" style="right:332px;top:316.2px;">8</div>
<div class="t ax" style="right:332px;top:348.2px;">4</div>
<div class="t ax" style="right:332px;top:407.3px;">100</div>
<div class="t ax" style="right:332px;top:437.3px;">50</div>
<div class="t ax" style="right:332px;top:468.3px;">0</div>
<div class="t ax" style="right:332px;top:521.3px;">0<i>.</i>0</div>
<div class="t ax" style="right:332px;top:547px;">-1<i>.</i>4</div>
<div class="t ax" style="right:341px;top:504px;color:#e8e8ff">1<i>.</i>23</div>
<div class="t ax" style="left:503px;top:376px;">X<span class="cj" style="font-size:11px">万</span></div>
<div class="t lb" style="left:476px;top:35px;">MA</div>
<div class="t lb" style="left:428px;top:299px;">VOL</div>
<div class="t lb" style="left:428px;top:393px;">KDJ</div>
<div class="t lb" style="left:422px;top:488px;">MACD</div>
<div class="t q" style="left:470px;top:298px;">?</div>
<div class="t q" style="left:470px;top:392px;">?</div>
<div class="t q" style="left:470px;top:487px;">?</div>
<div class="t cj" style="left:504px;top:12.5px;font-size:12px;color:#c0c0c0;font-weight:350">&lt;&lt;展开</div>
<div class="t as" style="left:-10px;top:48px">*</div>
<div class="t as" style="left:26px;top:48px">*</div>
<div class="t as" style="left:199px;top:48px">*</div>
<div class="t as" style="left:208px;top:48px">*</div>
<div class="t as" style="left:217px;top:48px">*</div>
<div class="t as" style="left:227px;top:48px">*</div>
<div class="t as" style="left:236px;top:48px">*</div>
<div class="t as" style="left:245px;top:48px">*</div>
<div class="t as" style="left:254px;top:48px">*</div>
<div class="t as" style="left:263px;top:48px">*</div>
<div class="t as" style="left:290px;top:48px">*</div>
<div class="t as" style="left:299px;top:48px">*</div>
<div class="t as" style="left:309px;top:48px">*</div>
<div class="t as" style="left:336px;top:48px">*</div>
<div class="t as" style="left:363px;top:48px">*</div>
<div class="t as" style="left:381px;top:48px">*</div>
<div class="t as" style="left:427px;top:48px">*</div>
<div class="t as" style="left:454px;top:48px">*</div>
<div class="t as" style="left:281px;top:61px;color:#ff00ff">*</div>
<div class="t ttl" style="left:689.5px;top:11.5px;">603638</div>
<div class="t ttl cj" style="left:743px;top:11px;letter-spacing:1.2px">艾迪精密</div>
<div class="t cj" style="left:552px;top:44px;width:61px;text-align:center;font-size:12px;line-height:18px;color:#fff;font-weight:bold;">盘口</div>
<div class="t cj" style="left:613px;top:44px;width:61px;text-align:center;font-size:12px;line-height:18px;color:#d0d0ff;">资金</div>
<div class="t cj" style="left:674px;top:44px;width:61px;text-align:center;font-size:12px;line-height:18px;color:#d0d0ff;">分析</div>
<div class="t cj" style="left:735px;top:44px;width:61px;text-align:center;font-size:12px;line-height:18px;color:#d0d0ff;">操作</div>
<div class="t ob cj" style="left:774.5px;top:63px;color:#d4d4d4">委比</div>
<div class="t num" style="right:7.5px;top:63px;color:#2ee65a">-23.52%</div>
<div class="t ob cj" style="left:774.5px;top:83px;color:#2ee65a">总卖量</div>
<div class="t num" style="right:7.5px;top:83px;color:#ff5050">34.09</div>
<div class="t ob cj" style="left:774.5px;top:103px;color:#d4d4d4">卖十</div>
<div class="t num" style="right:7.5px;top:103px;color:#ff5050">33.56</div>
<div class="t ob cj" style="left:774.5px;top:123px;color:#d4d4d4">卖九</div>
<div class="t num" style="right:7.5px;top:123px;color:#ff5050">33.55</div>
<div class="t ob cj" style="left:774.5px;top:143px;color:#d4d4d4">卖八</div>
<div class="t num" style="right:7.5px;top:143px;color:#ff5050">33.53</div>
<div class="t ob cj" style="left:774.5px;top:163px;color:#d4d4d4">卖七</div>
<div class="t num" style="right:7.5px;top:163px;color:#ff5050">33.52</div>
<div class="t ob cj" style="left:774.5px;top:183px;color:#d4d4d4">卖六</div>
<div class="t num" style="right:7.5px;top:183px;color:#ff5050">33.51</div>
<div class="t ob cj" style="left:774.5px;top:203px;color:#d4d4d4">卖五</div>
<div class="t num" style="right:7.5px;top:203px;color:#ff5050">33.50</div>
<div class="t ob cj" style="left:774.5px;top:223px;color:#d4d4d4">卖四</div>
<div class="t num" style="right:7.5px;top:223px;color:#ff5050">33.49</div>
<div class="t ob cj" style="left:774.5px;top:243px;color:#d4d4d4">卖三</div>
<div class="t num" style="right:7.5px;top:243px;color:#ff5050">33.48</div>
<div class="t ob cj" style="left:774.5px;top:263px;color:#d4d4d4">卖二</div>
<div class="t num" style="right:7.5px;top:263px;color:#ff5050">33.45</div>
<div class="t ob cj" style="left:774.5px;top:283px;color:#d4d4d4">卖一</div>
<div class="t num" style="right:7.5px;top:283px;color:#ff5050">33.41</div>
<div class="t ob cj" style="left:774.5px;top:323px;color:#d4d4d4">买一</div>
<div class="t num" style="right:7.5px;top:323px;color:#ff5050">33.33</div>
<div class="t ob cj" style="left:774.5px;top:343px;color:#d4d4d4">买二</div>
<div class="t num" style="right:7.5px;top:343px;color:#ff5050">33.32</div>
<div class="t ob cj" style="left:774.5px;top:363px;color:#d4d4d4">买三</div>
<div class="t num" style="right:7.5px;top:363px;color:#ff5050">33.31</div>
<div class="t ob cj" style="left:774.5px;top:383px;color:#d4d4d4">买四</div>
<div class="t num" style="right:7.5px;top:383px;color:#ff5050">33.30</div>
<div class="t ob cj" style="left:774.5px;top:403px;color:#d4d4d4">买五</div>
<div class="t num" style="right:7.5px;top:403px;color:#ff5050">33.29</div>
<div class="t ob cj" style="left:774.5px;top:423px;color:#d4d4d4">买六</div>
<div class="t num" style="right:7.5px;top:423px;color:#ff5050">33.28</div>
<div class="t ob cj" style="left:774.5px;top:443px;color:#d4d4d4">买七</div>
<div class="t num" style="right:7.5px;top:443px;color:#ff5050">33.24</div>
<div class="t ob cj" style="left:774.5px;top:463px;color:#d4d4d4">买八</div>
<div class="t num" style="right:7.5px;top:463px;color:#ff5050">33.23</div>
<div class="t ob cj" style="left:774.5px;top:483px;color:#d4d4d4">买九</div>
<div class="t num" style="right:7.5px;top:483px;color:#ff5050">33.22</div>
<div class="t ob cj" style="left:774.5px;top:503px;color:#d4d4d4">买十</div>
<div class="t num" style="right:7.5px;top:503px;color:#ff5050">33.20</div>
<div class="t ob cj" style="left:774.5px;top:523px;color:#ff5050">总买量</div>
<div class="t num" style="right:7.5px;top:523px;color:#2ee65a">31.93</div>
<div class="t ob cj" style="left:873px;top:63px;color:#c8c8c8">委</div>
<div class="t num" style="left:771px;top:303px;width:79px;text-align:center;color:#000">38%</div>
</div>
</div></body></html>
